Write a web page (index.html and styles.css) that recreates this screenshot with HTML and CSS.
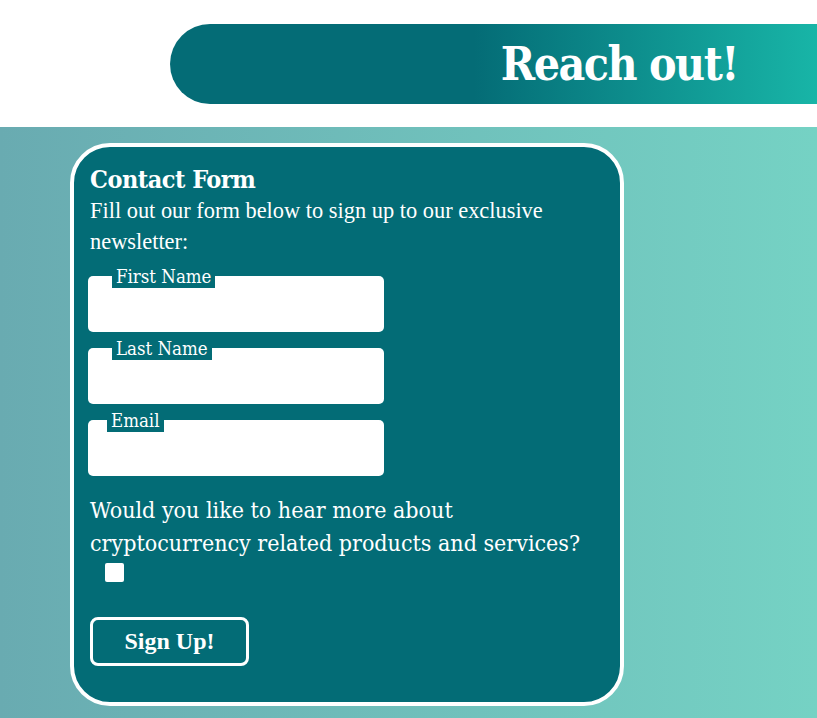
FILE: index.html
```html
<!DOCTYPE html>
<html lang="en">
<head>
<meta charset="utf-8">
<title>Reach out!</title>
<link rel="stylesheet" href="styles.css">
</head>
<body>
<header class="top">
  <div class="banner"><h1 class="banner-title">Reach out!</h1></div>
</header>
<main class="section">
  <form class="card">
    <h2 class="card-title">Contact Form</h2>
    <p class="intro">Fill out our form below to sign up to our exclusive newsletter:</p>
    <div class="field">
      <label class="field-label">First Name</label>
      <input class="field-input" type="text">
    </div>
    <div class="field">
      <label class="field-label">Last Name</label>
      <input class="field-input" type="text">
    </div>
    <div class="field">
      <label class="field-label field-label-email">Email</label>
      <input class="field-input" type="email">
    </div>
    <p class="question">Would you like to hear more about cryptocurrency related products and services?</p>
    <input class="check" type="checkbox">
    <button class="submit" type="button">Sign Up!</button>
  </form>
</main>
</body>
</html>
```
FILE: styles.css
```css
html, body {
  margin: 0;
  padding: 0;
  background: #ffffff;
}
body {
  font-family: "Liberation Serif", serif;
  min-height: 718px;
  overflow: hidden;
}
.top {
  padding: 24px 0 23px 170px;
}
.banner {
  height: 80px;
  border-radius: 40px 0 0 40px;
  background: linear-gradient(to right, #046c76 0%, #046c76 47%, #18b5a7 100%);
  display: flex;
  align-items: center;
  justify-content: flex-end;
  padding-right: 79px;
}
.banner-title {
  margin: 0;
  color: #ffffff;
  font-family: "DejaVu Serif Condensed", "DejaVu Serif", serif;
  font-stretch: condensed;
  font-weight: bold;
  font-size: 46px;
  letter-spacing: -1.5px;
}
.section {
  min-height: 591px;
  padding: 16px 0 0 70px;
  background: linear-gradient(to right, #69abb1 0%, #75d2c4 100%);
}
.card {
  box-sizing: border-box;
  width: 554px;
  height: 563px;
  border: 4px solid #ffffff;
  border-radius: 40px;
  background: #036c76;
  color: #ffffff;
  padding: 18px 16px 0 16px;
  display: flex;
  flex-direction: column;
  align-items: flex-start;
}
.card-title {
  margin: 0;
  font-family: "DejaVu Serif Condensed", "DejaVu Serif", serif;
  font-stretch: condensed;
  font-weight: bold;
  font-size: 25px;
  line-height: 30px;
  letter-spacing: -0.5px;
}
.intro {
  margin: 0;
  font-size: 22.4px;
  line-height: 31px;
}
.field {
  position: relative;
  margin-top: 16px;
  margin-left: -2px;
}
.field:first-of-type {
  margin-top: 19px;
}
.field-label {
  position: absolute;
  left: 24px;
  top: -10px;
  padding: 0 4px;
  background: #036c76;
  font-family: "DejaVu Serif Condensed", "DejaVu Serif", serif;
  font-stretch: condensed;
  font-size: 18.5px;
  line-height: 22px;
}
.field-label-email {
  left: 19px;
}
.field-input {
  display: block;
  box-sizing: border-box;
  width: 296px;
  height: 56px;
  border: none;
  border-radius: 5px;
  background: #ffffff;
  margin: 0;
}
.question {
  margin: 18px 0 0 0;
  font-family: "DejaVu Serif Condensed", "DejaVu Serif", serif;
  font-stretch: condensed;
  font-size: 23px;
  line-height: 33px;
}
.check {
  appearance: none;
  -webkit-appearance: none;
  width: 19px;
  height: 19px;
  margin: 3px 0 0 15px;
  background: #ffffff;
  border: none;
  border-radius: 2px;
}
.submit {
  margin-top: 35px;
  box-sizing: border-box;
  width: 159px;
  height: 49px;
  border: 3px solid #ffffff;
  border-radius: 8px;
  background: transparent;
  color: #ffffff;
  font-family: "Liberation Serif", serif;
  font-weight: bold;
  font-size: 24px;
}
```
